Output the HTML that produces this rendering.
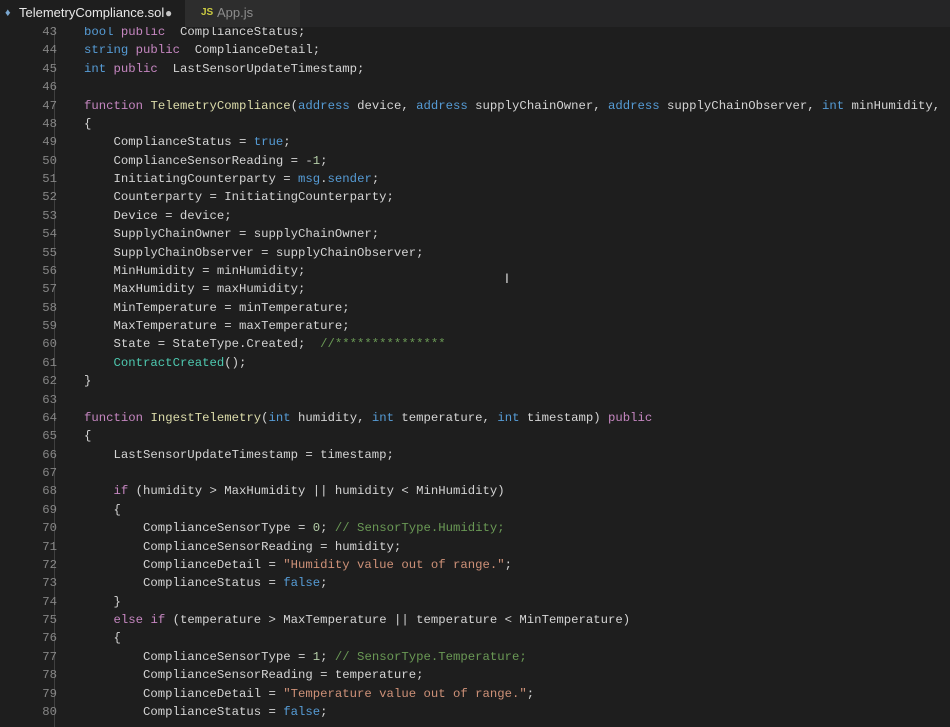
<!DOCTYPE html>
<html><head><meta charset="utf-8"><style>
body{margin:0;width:950px;height:720px;background:#1e1e1e;overflow:hidden;font-family:"Liberation Mono",monospace;}
.tabs{position:absolute;top:0;left:0;width:950px;height:27px;background:#252526;z-index:2;font-family:"Liberation Sans",sans-serif;font-size:13px;}
.tab{position:absolute;top:0;height:27px;line-height:26px;color:#e8e8e8;}
.t1{left:0;width:185px;background:#1e1e1e;}
.t2{left:185px;width:115px;background:#2d2d2d;color:#8c8c8c;}
.ed{position:absolute;top:23px;left:0;width:950px;font-size:12.3px;line-height:18.38px;white-space:pre;color:#d4d4d4;}
.ln{position:absolute;left:0;width:57px;text-align:right;color:#858585;}
.code{position:absolute;left:84px;}
.k{color:#c586c0}.t{color:#569cd6}.f{color:#dcdcaa}.s{color:#ce9178}.c{color:#6a9955}.n{color:#b5cea8}.g{color:#4ec9b0}
.guide{position:absolute;top:27px;width:1px;height:700px;background:#404040;}
</style></head><body>
<div class="tabs">
<div class="tab t1"><span style="position:absolute;left:5px;color:#7aa7d0;font-size:11px">♦</span><span style="position:absolute;left:19px">TelemetryCompliance.sol</span><span style="position:absolute;left:165px;top:0;color:#c5c5c5;font-size:12px">●</span></div>
<div class="tab t2"><span style="position:absolute;left:16px;color:#cbcb41;font-size:10px;font-weight:bold">JS</span><span style="position:absolute;left:32px">App.js</span></div>
</div>
<div class="guide" style="left:54px"></div>
<div class="ed"><div class="ln">43
44
45
46
47
48
49
50
51
52
53
54
55
56
57
58
59
60
61
62
63
64
65
66
67
68
69
70
71
72
73
74
75
76
77
78
79
80</div><div class="code"><span class="t">bool</span> <span class="k">public</span>  ComplianceStatus;
<span class="t">string</span> <span class="k">public</span>  ComplianceDetail;
<span class="t">int</span> <span class="k">public</span>  LastSensorUpdateTimestamp;

<span class="k">function</span> <span class="f">TelemetryCompliance</span>(<span class="t">address</span> device, <span class="t">address</span> supplyChainOwner, <span class="t">address</span> supplyChainObserver, <span class="t">int</span> minHumidity,
{
    ComplianceStatus = <span class="t">true</span>;
    ComplianceSensorReading = -<span class="n">1</span>;
    InitiatingCounterparty = <span class="t">msg</span>.<span class="t">sender</span>;
    Counterparty = InitiatingCounterparty;
    Device = device;
    SupplyChainOwner = supplyChainOwner;
    SupplyChainObserver = supplyChainObserver;
    MinHumidity = minHumidity;
    MaxHumidity = maxHumidity;
    MinTemperature = minTemperature;
    MaxTemperature = maxTemperature;
    State = StateType.Created;  <span class="c">//***************</span>
    <span class="g">ContractCreated</span>();
}

<span class="k">function</span> <span class="f">IngestTelemetry</span>(<span class="t">int</span> humidity, <span class="t">int</span> temperature, <span class="t">int</span> timestamp) <span class="k">public</span>
{
    LastSensorUpdateTimestamp = timestamp;

    <span class="k">if</span> (humidity &gt; MaxHumidity || humidity &lt; MinHumidity)
    {
        ComplianceSensorType = <span class="n">0</span>; <span class="c">// SensorType.Humidity;</span>
        ComplianceSensorReading = humidity;
        ComplianceDetail = <span class="s">"Humidity value out of range."</span>;
        ComplianceStatus = <span class="t">false</span>;
    }
    <span class="k">else</span> <span class="k">if</span> (temperature &gt; MaxTemperature || temperature &lt; MinTemperature)
    {
        ComplianceSensorType = <span class="n">1</span>; <span class="c">// SensorType.Temperature;</span>
        ComplianceSensorReading = temperature;
        ComplianceDetail = <span class="s">"Temperature value out of range."</span>;
        ComplianceStatus = <span class="t">false</span>;</div></div>
<div style="position:absolute;left:505px;top:270px;color:#ccc;font-family:'Liberation Sans';font-size:14px">I</div>
</body></html>
